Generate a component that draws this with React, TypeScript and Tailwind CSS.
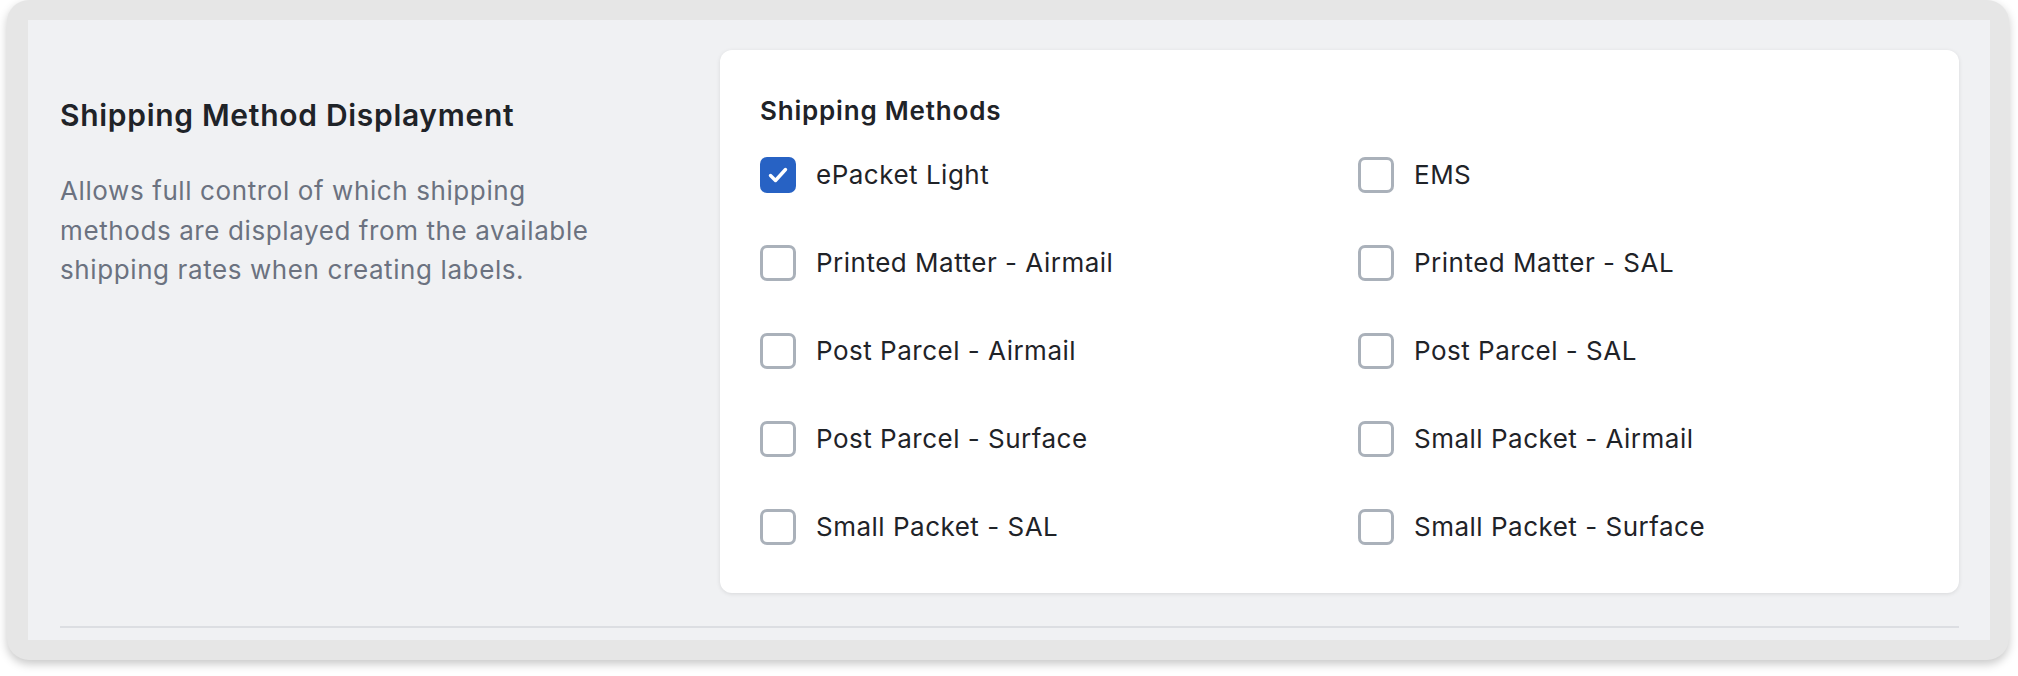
type Method = {
  label: string;
  checked?: boolean;
};

const methods: Method[] = [
  { label: "ePacket Light", checked: true },
  { label: "EMS" },
  { label: "Printed Matter - Airmail" },
  { label: "Printed Matter - SAL" },
  { label: "Post Parcel - Airmail" },
  { label: "Post Parcel - SAL" },
  { label: "Post Parcel - Surface" },
  { label: "Small Packet - Airmail" },
  { label: "Small Packet - SAL" },
  { label: "Small Packet - Surface" },
];

function Checkbox({ checked }: { checked?: boolean }) {
  if (checked) {
    return (
      <span className="flex h-[36px] w-[36px] shrink-0 items-center justify-center rounded-[7px] bg-[#2762c4]">
        <svg width="36" height="36" viewBox="0 0 36 36" fill="none">
          <path d="M10.5 18.5l5 5L25.5 12.5" stroke="#fff" strokeWidth="3.4" strokeLinecap="round" strokeLinejoin="round" />
        </svg>
      </span>
    );
  }
  return <span className="h-[36px] w-[36px] shrink-0 rounded-[7px] border-[3px] border-[#aab1ba] bg-white" />;
}

export default function App() {
  return (
    <div className="min-h-[676px] bg-white pl-[7px] font-['Inter','Liberation_Sans',sans-serif]">
      <div className="w-[2002px] rounded-[22px] bg-[#e6e6e6] py-[20px] pl-[21px] pr-[19px] shadow-[0_4px_10px_rgba(0,0,0,0.22)]">
        <div className="bg-[#f0f1f3] pl-[32px] pr-[31px] pt-[30px] pb-[12px]">
          <div className="flex">
            <div className="flex-1 pt-[47px]">
              <h2 className="text-[30px] leading-[36px] font-semibold tracking-[0.7px] text-[#1f2328]">Shipping Method Displayment</h2>
              <p className="mt-[38px] max-w-[545px] text-[26px] leading-[39.5px] tracking-[0.6px] text-[#6b7280]">
                Allows full control of which shipping methods are displayed from the available shipping rates when creating labels.
              </p>
            </div>
            <div className="w-[1239px] rounded-[12px] bg-white px-[40px] pt-[43px] pb-[44px] shadow-[0_1px_4px_rgba(0,0,0,0.1)]">
              <h3 className="text-[26px] leading-[36px] font-semibold tracking-[0.8px] text-[#1f2328]">Shipping Methods</h3>
              <div className="mt-[24px] grid grid-cols-2 gap-x-[37px] gap-y-[44px]">
                {methods.map((m) => (
                  <label key={m.label} className="flex h-[44px] items-center gap-[20px]">
                    <Checkbox checked={m.checked} />
                    <span className="text-[26px] leading-[44px] tracking-[0.5px] text-[#1f2328]">{m.label}</span>
                  </label>
                ))}
              </div>
            </div>
          </div>
          <div className="mt-[33px] h-[2px] bg-[#dcdee2]" />
        </div>
      </div>
    </div>
  );
}
